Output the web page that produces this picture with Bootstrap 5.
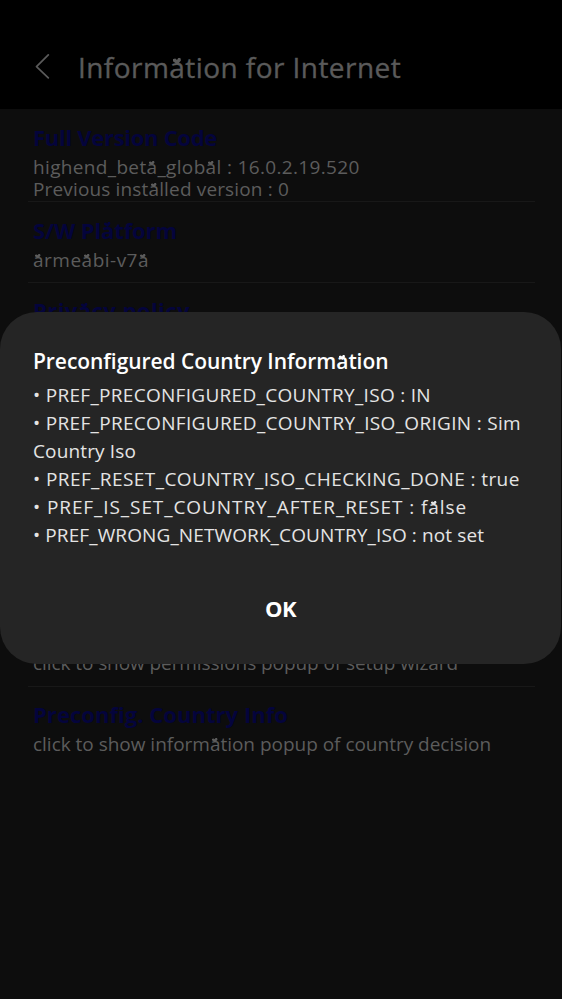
<!DOCTYPE html>
<html lang="en">
<head>
<meta charset="utf-8">
<meta name="viewport" content="width=device-width, initial-scale=1">
<title>Information for Internet</title>
<link href="https://cdn.jsdelivr.net/npm/bootstrap@5.3.0/dist/css/bootstrap.min.css" rel="stylesheet">
<style>
body{background:#0d0d0d;color:#5c5c5c;font-family:"Open Sans","Noto Sans",sans-serif;height:999px;overflow:hidden}
.topbar{background:#000;height:109px;padding:46.5px 0 0 35px}
.topbar svg{margin-top:7px}
.topbar h1{font-size:28px;font-weight:500;line-height:40px;letter-spacing:.44px;margin-left:28px;color:#5a5a5a;-webkit-text-stroke:.35px #5a5a5a}
.entries{margin:0 27px 0 28px}
.entry{height:80.75px;padding:12.5px 0 0 5px;border-bottom:1px solid #181818;white-space:nowrap}
.entry-first{height:93px}
.entry-policy{height:323px}
.entry h2{font-size:22px;line-height:30px;font-weight:700;color:#04043c;margin:0 0 4.2px}
.entry p{font-size:19px;line-height:22.5px;margin:0}
.sheet{top:312px;left:0;width:561px;height:352px;border-radius:37px;background:#252525;color:#e4e4e4;padding:33px 33px 0;white-space:nowrap}
.sheet h2{font-size:21px;line-height:32px;font-weight:600;color:#fff;margin:0 0 4px}
.sheet p{font-size:19px;line-height:28.1px;margin:0}
.ok-btn{font-size:22px;line-height:32px;font-weight:700;color:#fff;margin-top:42px;letter-spacing:-.56px}
/* small heart resting on the letter a */
.ha{position:relative}
.ha::before{content:"";position:absolute;left:.13em;top:.36em;width:.3em;height:.24em;background:currentColor;clip-path:polygon(50% 100%,0 40%,5% 5%,30% 0,50% 30%,70% 0,95% 5%,100% 40%);transform:rotate(-8deg)}
.t1{letter-spacing:-.29px}.t2{letter-spacing:-.11px}.t3{letter-spacing:.45px}.t4{letter-spacing:.04px}
.d1{letter-spacing:.34px}.d2{letter-spacing:.15px}.d3{letter-spacing:.49px}.d4{letter-spacing:-.08px}.d5{letter-spacing:-.02px}
.m0{letter-spacing:-.06px}.m1{letter-spacing:.3px}.m2{letter-spacing:.32px}.m3{letter-spacing:.14px}.m4{letter-spacing:.42px}.m5{letter-spacing:.91px}.m6{letter-spacing:.11px}
</style>
<script src="https://cdn.jsdelivr.net/npm/bootstrap@5.3.0/dist/js/bootstrap.bundle.min.js"></script>
</head>
<body class="position-relative m-0">
<header class="topbar d-flex align-items-start">
<svg class="flex-shrink-0" width="15" height="26" viewBox="0 0 15 26" fill="none" stroke="#5a5a5a" stroke-width="1.7" stroke-linecap="round" stroke-linejoin="round" aria-hidden="true"><path d="M13.3 .9 1.5 12.6 13.3 23.8"/></svg>
<h1 class="mb-0 text-nowrap">Inform<span class="ha">a</span>tion for Internet</h1>
</header>
<main class="entries">
<section class="entry entry-first"><h2 class="t1">Full Version Code</h2><p class="d1">highend_bet<span class="ha">a</span>_glob<span class="ha">a</span>l : 16.0.2.19.520</p><p class="d2">Previous inst<span class="ha">a</span>lled version : 0</p></section>
<section class="entry"><h2 class="t2">S/W Pl<span class="ha">a</span>tform</h2><p class="d3"><span class="ha">a</span>rme<span class="ha">a</span>bi-v7<span class="ha">a</span></p></section>
<section class="entry entry-policy"><h2 class="t3">Priv<span class="ha">a</span>cy policy</h2></section>
<section class="entry"><h2 class="invisible">&nbsp;</h2><p class="d4">click to show permissions popup of setup wizard</p></section>
<section class="entry border-0"><h2 class="t4">Preconfig. Country Info</h2><p class="d5">click to show inform<span class="ha">a</span>tion popup of country decision</p></section>
</main>
<div class="sheet position-absolute" role="dialog">
<h2 class="m0">Preconfigured Country Inform<span class="ha">a</span>tion</h2>
<p class="m1">• PREF_PRECONFIGURED_COUNTRY_ISO : IN</p>
<p class="m2">• PREF_PRECONFIGURED_COUNTRY_ISO_ORIGIN : Sim</p>
<p class="m3">Country Iso</p>
<p class="m4">• PREF_RESET_COUNTRY_ISO_CHECKING_DONE : true</p>
<p class="m5">• PREF_IS_SET_COUNTRY_AFTER_RESET : f<span class="ha">a</span>lse</p>
<p class="m6">• PREF_WRONG_NETWORK_COUNTRY_ISO : not set</p>
<button type="button" class="ok-btn btn border-0 p-0 d-block mx-auto">OK</button>
</div>
</body>
</html>
